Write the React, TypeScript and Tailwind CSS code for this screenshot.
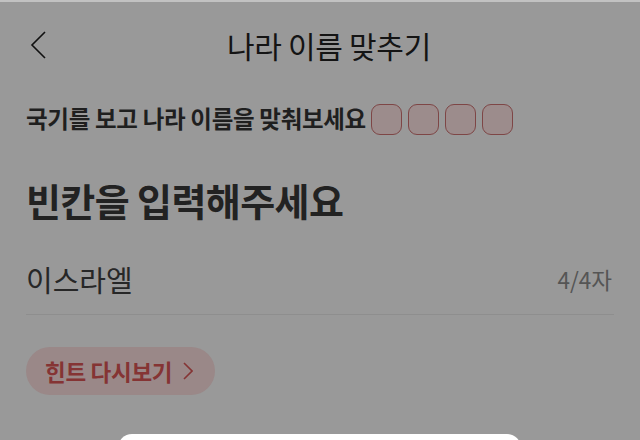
import React from 'react';

const font = { fontFamily: '"Noto Sans CJK KR", "Noto Sans", sans-serif' };

const App = () => {
  const slots = [0, 1, 2, 3];

  return (
    <div
      className="relative w-[640px] h-[440px] overflow-hidden bg-[#999999] border-t-2 border-[#c2c2c2]"
      style={font}
    >
      {/* header */}
      <div className="flex items-center h-[86px] pl-[30px] pr-[30px]">
        <svg width="16" height="28" viewBox="0 0 16 28" className="shrink-0">
          <path d="M15 1 L2 14 L15 27" fill="none" stroke="#111" strokeWidth="1.6" />
        </svg>
        <div className="flex-1 text-center pl-[18px] text-[30px] leading-none text-[#141414] tracking-[-0.3px]">
          나라 이름 맞추기
        </div>
        <div className="w-[16px]" />
      </div>

      <div className="px-[26px]">
        {/* instruction + answer slots */}
        <div className="mt-[11px] flex items-center h-[40px]">
          <span className="text-[23.5px] font-bold text-[#1f1f1f] tracking-[-0.3px] leading-none">
            국기를 보고 나라 이름을 맞춰보세요
          </span>
          <div className="flex gap-[6px] ml-[5px]">
            {slots.map((i) => (
              <div
                key={i}
                className="w-[31px] h-[31px] rounded-[9px] border-[1.5px] border-[#7e4646] bg-[#9c8c8c]"
              />
            ))}
          </div>
        </div>

        <h1 className="mt-[38px] h-[46px] text-[38px] font-bold leading-[46px] text-[#222] tracking-[-0.6px]">
          빈칸을 입력해주세요
        </h1>

        {/* input */}
        <div className="mt-[42px] flex items-center justify-between pb-[20px] border-b border-[#8e8e8e]">
          <span className="text-[29px] leading-none text-[#272727]">이스라엘</span>
          <span className="text-[22.5px] leading-none text-[#555] mr-[2px]">4/4자</span>
        </div>

        <button className="mt-[32px] flex items-center gap-[11px] h-[48px] pl-[19px] pr-[22px] rounded-full bg-[#9a8888]">
          <span className="text-[22.5px] font-bold text-[#853434] tracking-[-0.3px] leading-none">
            힌트 다시보기
          </span>
          <svg width="10" height="18" viewBox="0 0 10 18">
            <path d="M1 1 L9 9 L1 17" fill="none" stroke="#853434" strokeWidth="1.6" />
          </svg>
        </button>
      </div>

      {/* bottom sheet peeking */}
      <div className="absolute left-[118px] top-[432px] w-[403px] h-[40px] rounded-t-[14px] bg-white" />
    </div>
  );
};

export default App;
